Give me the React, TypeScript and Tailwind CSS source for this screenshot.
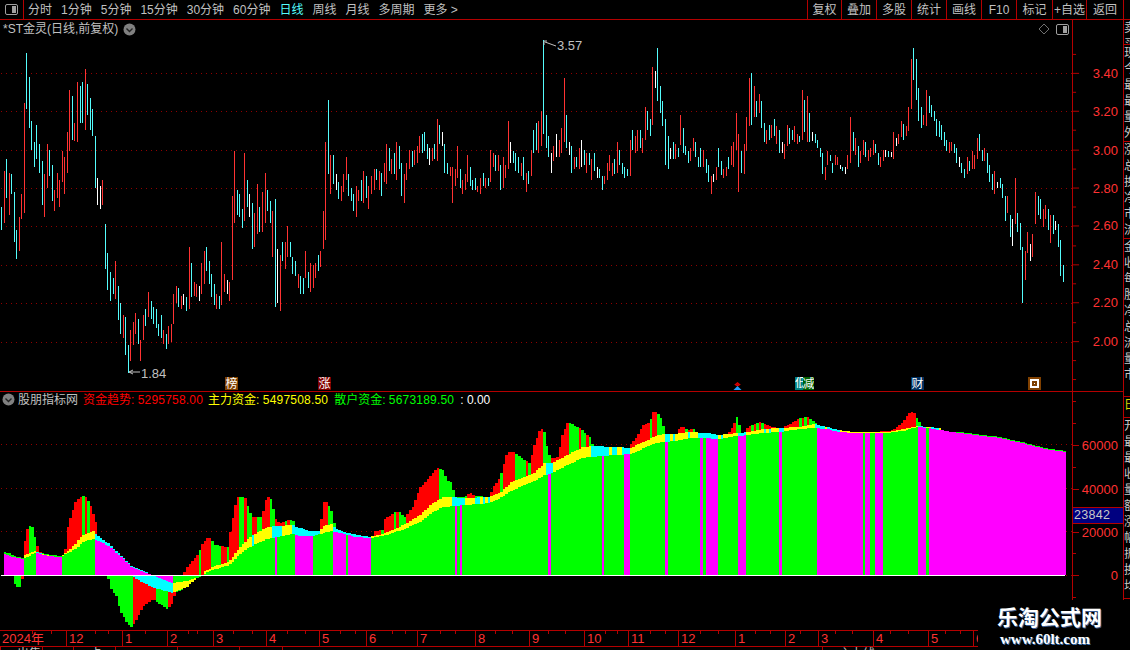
import React from "react";

const LINE = "#b40000";
const S0 = "4c207-230 13r171-223 19c159-198 28r173-215 34c174-194 43c192-242 49c230-259 58r217-251 64r194-219 73r103-213 79c53-109 88c77-128 94c121-150 103c142-167 109c125-159 118c144-173 127c161-205 133r174-217 142r144-188 148c150-176 157c165-201 163r190-211 172r173-198 178r180-207 187r151-182 193r157-194 202r132-173 208r90-151 217c96-140 223r123-141 232r82-142 241c86-123 247c82-123 256r69-130 262c84-115 271c98-130 277c109-136 286c136-188 292w178-205 301w186-209 307r180-205 316c224-269 322c253-290 331c272-301 340c278-294 346r261-299 355c286-320 361c303-334 370r315-338 376c317-355 385c345-373 391r330-361 400r322-345 406r313-334 415c319-344 421r340-361 430r315-340 436c309-326 445r292-317 454c301-319 460c307-324 469c309-328 475c324-336 484c315-338 490r330-344 499c334-349 505r326-344 514r324-342 520r294-324 529r286-303 535c288-307 544r296-309 550w294-305 559c297-311 568r247-309 574c263-297 583r282-296 589r284-297 598w286-301 604r263-294 613r251-284 619c247-271 628c261-284 634c274-297 643c284-305 649r294-309 658c296-309 664r242-305 673r274-292 682w280-294 688r282-301 697r196-280 703r151-223 712c190-215 718c194-217 727c209-228 733r153-221 742c180-207 748w194-217";
const S1 = "7c203-249 13r213-247 22r184-234 28c207-232 37r192-232 46r173-223 52c190-211 61c201-223 67r211-257 76c199-307 82w249-303 91r255-311 97c242-261 106r242-269 112r226-257 121c242-257 127c257-274 136c261-276 145r274-288 151c276-294 160c278-294 166r251-278 175c272-288 181r263-292 190r265-288 196r263-278 205c255-271 211r251-267 220r211-249 226r142-240 235c100-174 241r155-194 250c155-184 259w174-190 265c182-199 274r186-201 280r174-192 289r157-180 295c174-196 304c188-201 310c194-211 319r186-217 325r190-201 334c180-201 340r171-203 349c176-198 355r186-209 364r176-194 373r169-190 379c169-180 388r171-190 394c173-196 403r163-182 409r144-184 418c148-171 424r159-174 433c153-174 439r142-180 448c146-169 454c163-196 463r174-203 469r163-180 478r150-169 487c151-167 493r150-165 502r146-163 508r136-153 517c134-153 523c132-151 532c144-159 538w148-165 547r148-161 553c144-159 562r119-161 568c125-144 577w132-146 583c144-173 592c163-174 601r167-176 607r167-203 616r169-186 622r146-178 631c169-188 637r180-194 646r174-190 652r155-182 661c167-186 667c180-190 676c178-190 682r186-192 691r178-194 700c173-186 706r178-188 715c178-186 721r150-182 730r153-167 736c155-171 745r155-171 751c165-190 760r157-188 766r165-178 775r121-169 781w142-163 790c151-163 796c153-171 805c157-173";
const S2 = "4r163-176 10c157-180 19r173-192 25c171-184 34r150-176 40c130-153 49c123-150 55r121-153 64r111-146 70c40-134 79c115-148 85c136-157 94w153-173 100r146-161 109w134-157 118r140-157 124r128-153 133r78-142 139c115-148 148w142-155 154c146-173 163r157-169 169c157-167 178r148-169 184w140-167 193c150-165 199r153-173 208c153-165 214r159-180 223c153-171 232w167-178 238c169-178 247c176-190 253r176-184 262r163-180 268r155-171 277r163-176 283c159-174 292r142-173 298c150-165 307c163-174 313c167-178 322c169-176 331r140-176 337c130-150 346r136-153 352r130-151 361c130-148 367r138-153 376r107-140 382c111-130 391c119-136 397r67-125 406w71-88 412c48-101 421c86-113 427c101-126 436c119-165 445c136-169 451w148-159 460c142-159 466r144-159 475c148-157 481r115-145 490c128-153 496c146-155 505c151-163 511r148-161 520r138-151 526c142-157 535c157-167 541c148-167 550r150-167 559c159-173 565c165-182 574r176-194 580w174-182 589r167-180 595c148-167 604c161-175 610r169-178 619r167-176 625c157-169 634r146-165 640r142-167 649r113-150 655r134-192 664c151-173 673r144-174 679r117-151 688r78-126 694c73-125 703r86-117 709c101-117 718r94-113 724c101-128 733c123-142 739r130-144 748c125-140 754r125-138 763c119-136 769r126-144 778c130-153 787w142-153 793r144-159 802r125-146 808c128-144 817c130-140 823r126-142 832r134-144 838c136-142 847r90-140 853c100-132 862r96-142 868c113-142";
const S3 = "37w132-141 46c134-143 52c140-148 61c148-157 67c153-174 76r167-180 82r151-165 91c155-161 97c163-173 106r155-165 112r157-165 121w165-169 127c167-171 136w167-174 142r155-169 151r117-163 160c132-151 166r138-155 175c146-167 181r151-163 190r140-155 196c142-157 205r150-161 211r148-157 220r140-155 226c144-153 235c153-165 241r157-167 250r150-161 256w150-157 265c151-157 274w152-157 280r132-159 289w138-146 295r134-144 304r121-137 310c124-140 319r126-136 325r107-131 334r59-109 340c48-80 349c59-100 355c88-121 364c107-128 370r115-125 379r90-126 388c96-113 394c105-117 403c111-121 409c119-136 418c121-137 424c125-140 433c132-146 439c140-151 448r142-153 454r142-151 463c144-153 469c148-163 478w157-167 484c163-173 493c169-178 502r157-174 508c161-171 517r151-169 523r155-169 532r138-159 538c134-151 547c150-161 553r148-161 562c153-173 568c165-182 577c174-190 583r171-194 592w182-188 601c178-188 607c184-198 616c196-221 622r196-213 631c215-237 637w219-246 646r178-224 652c213-232 661c223-250 667c247-303 676r251-280 682r232-253 691w244-261 697r234-257 706r192-224 715c196-215 721c199-219 730r209-227 736r205-219 745c209-230 751r215-243 760c215-234 766w221-230 775c224-247 781c240-276 790c265-282";

type Bar = { x: number; c: string; t: number; b: number };
function parse(base: number, s: string): Bar[] {
  const out: Bar[] = [];
  for (const m of s.matchAll(/(\d+)([crw])(\d+)-(\d+)/g)) {
    out.push({ x: Math.floor(base + Number(m[1]) / 3), c: m[2], t: Number(m[3]), b: Number(m[4]) });
  }
  return out;
}
const bars: Bar[] = [...parse(0, S0), ...parse(250, S1), ...parse(520, S2), ...parse(800, S3)];
const barColor: Record<string, string> = { c: "#54fcfc", r: "#ff3232", w: "#ffffff" };

type Pt = [number, number];
const L: Pt[] = [[4,554],[14,557],[23,559],[35,553],[36,553],[50,556],[61,557],[68,553],[77,548],[83,542],[93,539],[100,541],[110,547],[123,558],[133,568],[147,573],[152,575],[203,575],[204,574],[213,570],[230,565],[240,554],[250,547],[267,539],[277,537],[293,534],[300,536],[312,536],[332,531],[345,534],[355,537],[370,538],[383,536],[393,533],[407,528],[420,522],[433,512],[443,507],[490,503],[500,498],[513,490],[533,482],[545,475],[553,473],[567,465],[583,458],[590,457],[602,456],[617,455],[630,454],[640,450],[653,444],[663,442],[675,441],[690,438],[700,438],[720,439],[737,436],[748,435],[763,433],[780,432],[800,429],[815,428],[827,429],[840,432],[853,433],[873,433],[887,433],[903,431],[917,427],[930,428],[940,430],[960,433],[1000,438],[1030,445],[1045,449],[1065,452]];
const B: Pt[] = [[4,554],[14,557],[23,559],[25,555],[35,551],[40,553],[50,556],[61,557],[68,551],[77,542],[83,535],[93,531],[100,537],[108,543],[123,557],[133,567],[147,572],[152,575],[203,575],[204,572],[213,567],[230,561],[240,547],[250,537],[267,527],[277,526],[293,525],[300,528],[310,531],[320,531],[323,526],[332,524],[335,528],[347,533],[370,537],[383,534],[393,530],[407,523],[420,515],[433,503],[443,497],[452,497],[464,498],[490,497],[500,493],[513,481],[533,474],[545,463],[553,463],[567,455],[583,447],[593,446],[617,447],[630,448],[637,445],[647,441],[653,437],[663,434],[675,434],[690,432],[707,433],[720,435],[737,433],[748,432],[763,429],[780,428],[800,427],[815,424],[827,427],[840,430],[853,432],[887,432],[903,429],[917,426],[930,427],[940,428],[945,431],[960,433],[1000,438],[1030,445],[1045,449],[1065,452]];
const P: Pt[] = [[4,552],[10,553],[14,556],[23,558],[24,550],[26,532],[29,526],[33,527],[35,537],[37,545],[40,552],[45,554],[62,556],[65,553],[68,527],[75,503],[80,497],[85,495],[90,503],[97,525],[98,531],[100,600],[181,600],[182,575],[187,568],[197,556],[203,543],[207,538],[211,538],[215,545],[228,547],[232,523],[237,497],[245,497],[252,517],[262,517],[267,496],[272,500],[275,518],[280,523],[290,519],[295,522],[300,600],[319,600],[320,529],[324,502],[327,502],[332,512],[335,525],[337,600],[372,600],[375,531],[383,530],[385,519],[395,512],[400,512],[405,517],[413,507],[420,488],[427,480],[437,468],[443,470],[447,480],[452,483],[455,497],[465,497],[470,493],[473,494],[474,496],[490,497],[493,487],[500,478],[507,453],[513,451],[523,459],[530,463],[535,443],[541,427],[545,433],[548,453],[553,459],[558,457],[563,433],[568,422],[580,428],[590,437],[593,445],[596,600],[628,600],[630,445],[637,437],[643,425],[650,422],[654,411],[658,413],[662,420],[665,432],[668,600],[676,600],[677,432],[680,427],[685,427],[688,431],[693,428],[697,432],[699,600],[726,600],[727,435],[732,428],[737,417],[740,427],[742,433],[745,600],[746,432],[748,427],[760,422],[767,425],[777,428],[782,428],[790,424],[800,418],[808,417],[815,422],[817,424],[818,600],[872,600],[873,432],[887,431],[893,430],[903,422],[910,412],[915,413],[918,420],[922,426],[924,600],[944,600],[945,432],[960,432],[1000,437],[1030,444],[1045,448],[1065,451]];
const NL: Pt[] = [[152,575],[160,578],[173,583],[187,581],[202,576],[204,575]];
const NB: Pt[] = [[131,575],[132,576],[143,583],[155,588],[173,593],[187,587],[200,576],[204,575]];
const NP: Pt[] = [[13,575],[14,582],[16,585],[17,587],[21,587],[22,583],[23,575],[107,575],[108,576],[110,587],[117,597],[120,610],[127,623],[131,627],[135,623],[143,607],[153,599],[160,604],[167,609],[173,603],[175,593],[187,587],[200,576],[204,575]];

function at(pts: Pt[], x: number, dflt = 575) {
  if (x < pts[0][0] || x > pts[pts.length - 1][0]) return dflt;
  for (let i = 1; i < pts.length; i++) {
    if (x <= pts[i][0]) {
      const [a, b] = pts[i - 1];
      const [c, d] = pts[i];
      return Math.round(c === a ? d : b + ((d - b) * (x - a)) / (c - a));
    }
  }
  return dflt;
}
type R = [number, number][];
const inR = (r: R, x: number) => r.some(([a, b]) => x >= a && x < b);
const magenta: R = [[0,23],[35,61],[93,204],[274,277],[293,312],[332,345],[347,370],[454,457],[459,462],[547,550],[601,604],[623,629],[664,667],[699,702],[705,718],[737,746],[778,781],[816,862],[864,870],[874,882],[917,925],[928,1070]];
const cyan: R = [[35,40],[93,204],[251,254],[271,282],[291,320],[332,370],[451,464],[474,479],[482,485],[487,490],[545,553],[590,609],[611,616],[621,629],[663,670],[672,675],[687,690],[697,707],[708,718],[719,723],[737,746],[763,766],[768,771],[778,784],[814,823],[827,838],[917,925],[930,937]];
const red: R = [[24,29],[35,40],[63,81],[84,86],[89,97],[182,198],[201,210],[220,222],[224,225],[229,239],[243,246],[252,255],[261,269],[274,283],[287,290],[320,327],[331,332],[373,380],[384,393],[396,398],[406,438],[467,473],[490,499],[502,514],[525,527],[529,543],[550,567],[578,580],[585,587],[630,649],[652,656],[678,684],[687,692],[695,699],[727,736],[746,750],[753,755],[758,760],[764,787],[787,798],[802,803],[807,808],[873,915]];
const negRed: R = [[21,24],[132,155],[167,175]];

const Y0 = 575;
const xs = [...new Set(bars.map((b) => b.x))].filter((x) => x >= 4).sort((a, b) => a - b);
const columns = xs.map((x, i) => ({ x, w: (xs[i + 1] ?? 1066) - x }));

function IndicatorArea() {
  return (
    <g shapeRendering="crispEdges">
      {columns.map(({ x, w }) => {
        const c = x + w / 2;
        const l = Math.min(at(L, c), Y0);
        const b = Math.min(at(B, c), l);
        const p = Math.min(at(P, c), b);
        const nl = Math.max(at(NL, c), Y0);
        const nb = Math.max(at(NB, c), nl);
        const np = Math.max(at(NP, c), nb);
        return (
          <g key={x}>
            {l < Y0 && <rect x={x} y={l} width={w} height={Y0 - l} fill={inR(magenta, x) ? "#ff00ff" : "#00ff00"} />}
            {b < l && <rect x={x} y={b} width={w} height={l - b} fill={inR(cyan, x) ? "#00ffff" : "#ffff00"} />}
            {p < b && <rect x={x} y={p} width={w} height={b - p} fill={inR(red, x) ? "#ff0000" : "#00ff00"} />}
            {nl > Y0 && <rect x={x} y={Y0} width={w} height={nl - Y0} fill={x < 173 ? "#ff00ff" : "#00ff00"} />}
            {nb > nl && <rect x={x} y={nl} width={w} height={nb - nl} fill={x < 173 ? "#00ffff" : "#ffff00"} />}
            {np > nb && <rect x={x} y={nb} width={w} height={np - nb} fill={inR(negRed, x) ? "#ff0000" : "#00ff00"} />}
          </g>
        );
      })}
    </g>
  );
}

const Chevron = () => (
  <svg width="13" height="13" viewBox="0 0 13 13" className="shrink-0">
    <circle cx="6.5" cy="6.5" r="6" fill="#808080" />
    <path d="M3.5 5.5 L6.5 8.5 L9.5 5.5" stroke="#222" strokeWidth="1.4" fill="none" />
  </svg>
);

const PanelIcon = () => (
  <svg width="13" height="11" viewBox="0 0 13 11" className="shrink-0">
    <rect x="0.5" y="0.5" width="12" height="10" rx="1.5" fill="none" stroke="#a0a0a0" />
    <rect x="7" y="2" width="4" height="7" fill="#a0a0a0" />
  </svg>
);

const leftTabs = ["分时", "1分钟", "5分钟", "15分钟", "30分钟", "60分钟", "日线", "周线", "月线", "多周期", "更多 >"];
const rightTabs = [
  { t: "复权", w: "w-[34px]" },
  { t: "叠加", w: "w-[35px]" },
  { t: "多股", w: "w-[35px]" },
  { t: "统计", w: "w-[35px]" },
  { t: "画线", w: "w-[35px]" },
  { t: "F10", w: "w-[35px]" },
  { t: "标记", w: "w-[36px]" },
  { t: "+自选", w: "w-[34px]" },
  { t: "返回", w: "w-[37px]" },
];

const priceGrid = [
  { y: 73, t: "3.40" }, { y: 111, t: "3.20" }, { y: 150, t: "3.00" }, { y: 188, t: "2.80" },
  { y: 226, t: "2.60" }, { y: 265, t: "2.40" }, { y: 303, t: "2.20" }, { y: 342, t: "2.00" },
];
const priceMinor = [54, 92, 130, 169, 207, 246, 284, 323, 361, 380];
const indGrid = [{ y: 445, t: "60000" }, { y: 489, t: "40000" }, { y: 532, t: "20000" }, { y: 575, t: "0" }];
const indMinor = [401, 423, 467, 510, 553, 597];

const months = [
  { t: "2024年", w: "w-[66px]" }, { t: "12", w: "w-[56px]" }, { t: "1", w: "w-[45px]" }, { t: "2", w: "w-[46px]" },
  { t: "3", w: "w-[53px]" }, { t: "4", w: "w-[53px]" }, { t: "5", w: "w-[47px]" }, { t: "6", w: "w-[51px]" },
  { t: "7", w: "w-[58px]" }, { t: "8", w: "w-[54px]" }, { t: "9", w: "w-[55px]" }, { t: "10", w: "w-[44px]" },
  { t: "11", w: "w-[50px]" }, { t: "12", w: "w-[57px]" }, { t: "1", w: "w-[50px]" }, { t: "2", w: "w-[33px]" },
  { t: "3", w: "w-[55px]" }, { t: "4", w: "w-[55px]" }, { t: "5", w: "w-[45px]" }, { t: "6", w: "w-[5px]" },
];
const timeTicks = [32, 51, 95, 108, 145, 188, 197, 233, 252, 287, 305, 340, 355, 392, 405, 440, 455, 495, 512, 548, 565, 605, 617, 650, 665, 700, 718, 755, 770, 800, 835, 852, 890, 908, 945, 960];

const bottomCells = [
  { t: "出售", w: "w-[42px]" }, { t: "", w: "w-[31px]" }, { t: "卡", w: "w-[42px]" }, { t: "", w: "w-[62px]" },
  { t: "", w: "w-[62px]" }, { t: "", w: "w-[43px]" }, { t: "", w: "w-[540px]" }, { t: "主力线", w: "w-[100px]" },
];

const sideRows = [
  { h: "h-[25px]", rows: ["卖", "买"] },
  { h: "h-[97px]", rows: ["现", "今", "最", "最", "量", "外"] },
  { h: "h-[97px]", rows: ["涨", "总", "换", "净", "市", "流"] },
  { h: "h-[158px]", rows: ["金", "收", "每", "股", "净", "总", "流", "量", "市"] },
  { h: "h-[21px]", rows: ["日"], y: true },
  { h: "h-[181px]", rows: ["开", "最", "最", "收", "量", "额", "涨", "幅", "振", "换", "均"] },
];

export default function App() {
  return (
    <div className="relative w-[1130px] h-[650px] overflow-hidden bg-black text-[12px] leading-none text-[#c0c0c0] font-['Liberation_Sans','Noto_Sans_CJK_SC',sans-serif]">
      {/* toolbar */}
      <div className="flex h-[20px] border-b border-[#b40000]">
        <div className="flex w-[24px] shrink-0 items-center justify-center border-r border-[#b40000]">
          <PanelIcon />
        </div>
        <div className="ml-[4px] flex flex-1 items-center gap-[9px]">
          {leftTabs.map((t) => (
            <span key={t} className={t === "日线" ? "text-[#54fcfc]" : ""}>{t}</span>
          ))}
        </div>
        <div className="flex border-l border-[#b40000]">
          {rightTabs.map((b) => (
            <div key={b.t} className={`${b.w} flex items-center justify-center whitespace-nowrap border-r border-[#b40000]`}>{b.t}</div>
          ))}
        </div>
        <div className="w-[6px]" />
      </div>

      <div className="flex items-start">
        {/* charts */}
        <div className="w-[1072px] shrink-0">
          <div className="h-[372px] border-b border-[#b40000]">
            <div className="flex h-[18px] items-center justify-between pl-[3px] pr-[3px]">
              <div className="flex items-center gap-[5px]">
                <span>*ST金灵(日线,前复权)</span>
                <Chevron />
              </div>
              <div className="flex items-center gap-[6px]">
                <svg width="12" height="12" viewBox="0 0 12 12"><path d="M6 1 L11 6 L6 11 L1 6 Z" fill="none" stroke="#707070" /></svg>
                <PanelIcon />
              </div>
            </div>
            <svg width="1072" height="353" viewBox="0 38 1072 353" className="block">
              {priceGrid.map((g) => (
                <line key={g.y} x1="1" x2="1072" y1={g.y + 0.5} y2={g.y + 0.5} stroke="#900000" strokeDasharray="1 4" />
              ))}
              <g shapeRendering="crispEdges">
                {bars.map((b, i) => (
                  <rect key={i} x={b.x} y={b.t} width="1" height={b.b - b.t} fill={barColor[b.c]} />
                ))}
              </g>
              <path d="M544 41 V45 M544 41 H547 M545 42 L556 46" stroke="#c0c0c0" fill="none" />
              <text x="557" y="50" fontSize="13" fill="#c0c0c0" fontFamily="Liberation Sans">3.57</text>
              <path d="M129 372 H140 M129 372 L133 370 M129 372 L133 374" stroke="#c0c0c0" fill="none" />
              <text x="141" y="378" fontSize="13" fill="#c0c0c0" fontFamily="Liberation Sans">1.84</text>
            </svg>
          </div>
          <div className="h-[238px]">
            <div className="flex h-[15px] items-center whitespace-nowrap pl-[2px]">
              <Chevron />
              <span className="ml-[3px]">股朋指标网</span>
              <span className="ml-[5px] text-[#ff0000]">资金趋势: <span className="tracking-[0.2px]">5295758.00</span></span>
              <span className="ml-[5px] text-[#ffff00]">主力资金: <span className="tracking-[0.2px]">5497508.50</span></span>
              <span className="ml-[6px] text-[#00ff00]">散户资金: <span className="tracking-[0.2px]">5673189.50</span></span>
              <span className="ml-[6px] text-white">: 0.00</span>
            </div>
            <svg width="1072" height="223" viewBox="0 407 1072 223" className="block">
              {indGrid.slice(0, 3).map((g) => (
                <line key={g.y} x1="1" x2="1072" y1={g.y - 0.5} y2={g.y - 0.5} stroke="#900000" strokeDasharray="1 4" />
              ))}
              <line x1="1066" x2="1072" y1="575.5" y2="575.5" stroke="#900000" strokeDasharray="1 4" />
              <IndicatorArea />
              <rect x="1" y="575" width="1064" height="1" fill="#ffffff" shapeRendering="crispEdges" />
            </svg>
          </div>
          {/* time axis */}
          <div className="relative w-[978px] h-[17px] overflow-hidden border-y border-[#b40000]">
            <svg width="978" height="3" className="absolute left-0 top-0">
              {timeTicks.map((x) => (
                <line key={x} x1={x + 0.5} x2={x + 0.5} y1="0" y2="3" stroke="#b40000" />
              ))}
            </svg>
            <div className="flex h-full">
              {months.map((m, i) => (
                <div key={i} className={`${m.w} shrink-0 overflow-hidden whitespace-nowrap pl-[2px] text-[13px] leading-[15px] text-[#ff3232] ${i > 0 ? "border-l border-[#b40000]" : ""}`}>
                  {m.t}
                </div>
              ))}
            </div>
          </div>
          {/* clipped status row */}
          <div className="flex h-[3px] overflow-hidden">
            {bottomCells.map((c, i) => (
              <div key={i} className={`${c.w} shrink-0 border-l border-[#b40000] pl-[16px] whitespace-nowrap leading-[14px]`}>{c.t}</div>
            ))}
          </div>
        </div>

        {/* value axis */}
        <div className="h-[580px] w-[52px] shrink-0 border-x border-[#b40000]">
          <svg width="50" height="372" viewBox="1073 20 50 372" className="block border-b border-[#b40000]">
            {priceGrid.map((g) => (
              <g key={g.y}>
                <rect x="1073" y={g.y} width="6" height="1" fill={LINE} />
                <text x="1118" y={g.y + 5} textAnchor="end" fontSize="13" fill="#ff3232" fontFamily="Liberation Sans">{g.t}</text>
              </g>
            ))}
            {priceMinor.map((y) => (
              <rect key={y} x="1073" y={y} width="3" height="1" fill={LINE} />
            ))}
          </svg>
          <div className="relative">
            <svg width="50" height="208" viewBox="1073 392 50 208" className="block">
              {indGrid.map((g) => (
                <g key={g.y}>
                  <rect x="1073" y={g.y} width="6" height="1" fill={LINE} />
                  <text x="1118" y={g.y + 5} textAnchor="end" fontSize="13" fill="#ff3232" fontFamily="Liberation Sans">{g.t}</text>
                </g>
              ))}
              {indMinor.map((y) => (
                <rect key={y} x="1073" y={y} width="3" height="1" fill={LINE} />
              ))}
            </svg>
            <div className="absolute left-0 top-[115px] flex h-[17px] w-[50px] items-center border-y border-[#b40000] bg-[#000080] pl-[1px] text-[12.5px] tracking-[0.3px] text-[#c8c8c8]">23842</div>
          </div>
        </div>

        {/* clipped side panel */}
        <div className="h-[580px] flex-1 overflow-hidden">
          {sideRows.map((s, i) => (
            <div key={i} className={`${s.h} overflow-hidden border-b border-[#b40000] leading-[16px] ${s.y ? "text-[#d8d800]" : "text-[#c8c8c8]"}`}>
              {s.rows.map((r, j) => (
                <div key={j} className="h-[16px]">{r}</div>
              ))}
            </div>
          ))}
        </div>
      </div>

      {/* chart markers */}
      <div className="absolute left-[225px] top-[377px] flex h-[13px] w-[13px] items-center justify-center bg-[#804000] text-white">榜</div>
      <div className="absolute left-[318px] top-[377px] flex h-[13px] w-[13px] items-center justify-center bg-[#800000] text-white">涨</div>
      <svg width="9" height="8" viewBox="0 0 9 8" className="absolute left-[733px] top-[382px]">
        <path d="M4.5 0 L8 3 H6 L4.5 1.8 L3 3 H1 Z M4.5 2 L7 4 H2 Z" fill="#e00000" />
        <path d="M4.5 4 L8.5 8 H0.5 Z" fill="#20a0ff" />
      </svg>
      <div className="absolute left-[795px] top-[377px] flex h-[13px] w-[9px] justify-start overflow-hidden bg-[#008080] leading-[13px] text-white">低</div>
      <div className="absolute left-[803px] top-[377px] flex h-[13px] w-[11px] items-center justify-center overflow-hidden bg-[#006000] text-white">减</div>
      <div className="absolute left-[911px] top-[377px] flex h-[13px] w-[13px] items-center justify-center bg-[#003060] text-white">财</div>
      <div className="absolute left-[1028px] top-[377px] flex h-[13px] w-[13px] items-center justify-center bg-[#804000]">
        <div className="flex h-[9px] w-[9px] items-center justify-center border-2 border-white">
          <div className="h-[1px] w-[1px] bg-white" />
        </div>
      </div>

      {/* watermark */}
      <div className="absolute left-[997px] top-[607px] flex w-[104px] flex-col items-start font-['Liberation_Serif','Noto_Sans_CJK_SC',serif] font-bold text-white">
        <div className="whitespace-nowrap text-[21px] leading-[23px] [text-shadow:1px_1px_0_#3a5a90]">乐淘公式网</div>
        <div className="ml-[3px] mt-[2px] whitespace-nowrap text-[15px] leading-[15px] [text-shadow:1px_1px_0_#3a70b0]">www.60lt.com</div>
      </div>
    </div>
  );
}
